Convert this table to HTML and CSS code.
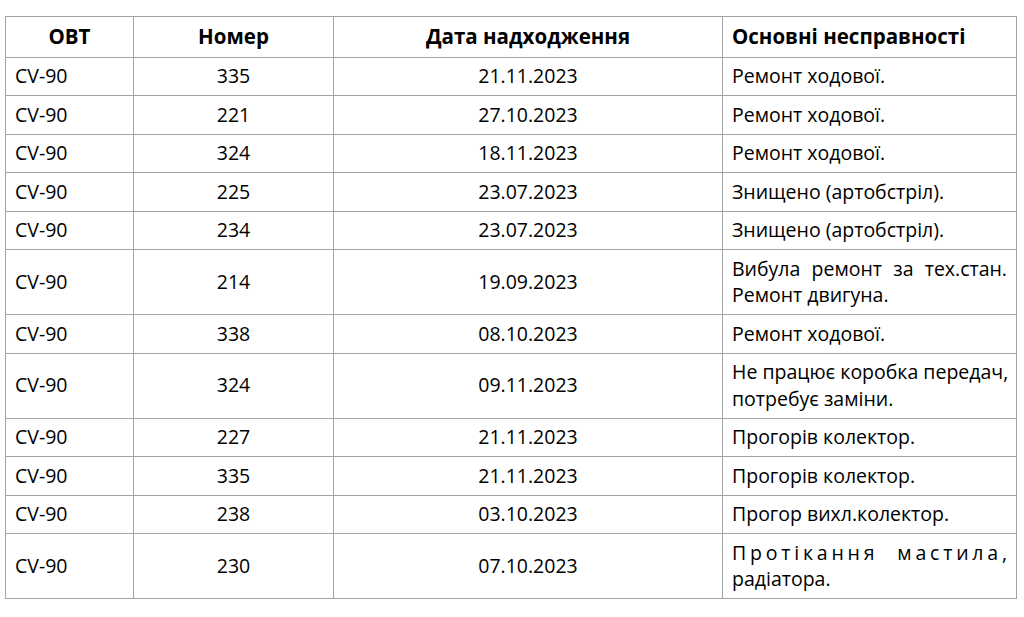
FILE: index.html
```html
<!DOCTYPE html>
<html lang="uk">
<head>
<meta charset="utf-8">
<title>ОВТ</title>
<link rel="stylesheet" href="styles.css">
</head>
<body>
<table class="grid">
  <colgroup>
    <col class="c-type">
    <col class="c-num">
    <col class="c-date">
    <col class="c-note">
  </colgroup>
  <thead>
    <tr>
      <th class="center">ОВТ</th>
      <th class="center">Номер</th>
      <th class="center">Дата надходження</th>
      <th class="left">Основні несправності</th>
    </tr>
  </thead>
  <tbody>
    <tr><td>CV-90</td><td class="center">335</td><td class="center">21.11.2023</td><td class="note">Ремонт ходової.</td></tr>
    <tr><td>CV-90</td><td class="center">221</td><td class="center">27.10.2023</td><td class="note">Ремонт ходової.</td></tr>
    <tr><td>CV-90</td><td class="center">324</td><td class="center">18.11.2023</td><td class="note">Ремонт ходової.</td></tr>
    <tr><td>CV-90</td><td class="center">225</td><td class="center">23.07.2023</td><td class="note">Знищено (артобстріл).</td></tr>
    <tr><td>CV-90</td><td class="center">234</td><td class="center">23.07.2023</td><td class="note">Знищено (артобстріл).</td></tr>
    <tr><td>CV-90</td><td class="center">214</td><td class="center">19.09.2023</td><td class="note"><span class="jl">Вибула ремонт за тех.стан.</span>Ремонт двигуна.</td></tr>
    <tr><td>CV-90</td><td class="center">338</td><td class="center">08.10.2023</td><td class="note">Ремонт ходової.</td></tr>
    <tr><td>CV-90</td><td class="center">324</td><td class="center">09.11.2023</td><td class="note"><span class="jl">Не працює коробка передач,</span>потребує заміни.</td></tr>
    <tr><td>CV-90</td><td class="center">227</td><td class="center">21.11.2023</td><td class="note">Прогорів колектор.</td></tr>
    <tr><td>CV-90</td><td class="center">335</td><td class="center">21.11.2023</td><td class="note">Прогорів колектор.</td></tr>
    <tr><td>CV-90</td><td class="center">238</td><td class="center">03.10.2023</td><td class="note">Прогор вихл.колектор.</td></tr>
    <tr><td>CV-90</td><td class="center">230</td><td class="center">07.10.2023</td><td class="note"><span class="jl spaced">Протікання мастила,</span>радіатора.</td></tr>
  </tbody>
</table>
</body>
</html>
```

FILE: styles.css
```css
html, body {
  margin: 0;
  padding: 0;
  background: #ffffff;
}

body {
  font-family: "Open Sans", "Noto Sans", sans-serif;
  font-size: 19.5px;
  color: #000000;
}

.grid {
  margin: 16px 0 0 5px;
  width: 1011px;
  table-layout: fixed;
  border-collapse: collapse;
}

.c-type { width: 128px; }
.c-num { width: 200px; }
.c-date { width: 389px; }
.c-note { width: 294px; }

.grid th,
.grid td {
  border: 1px solid #a3a3a3;
  line-height: 26.5px;
  padding: 5.5px 9px;
  vertical-align: middle;
  text-align: left;
}

.grid th {
  font-weight: 700;
  font-size: 20.5px;
  padding: 6px 9px 7px;
}

.grid .center {
  text-align: center;
}

.grid .left {
  text-align: left;
}

.note {
  text-align: justify;
}

.jl {
  display: block;
  white-space: nowrap;
  text-align: justify;
  text-align-last: justify;
}

.spaced {
  letter-spacing: 3.8px;
  margin-right: -3.8px;
}
```
